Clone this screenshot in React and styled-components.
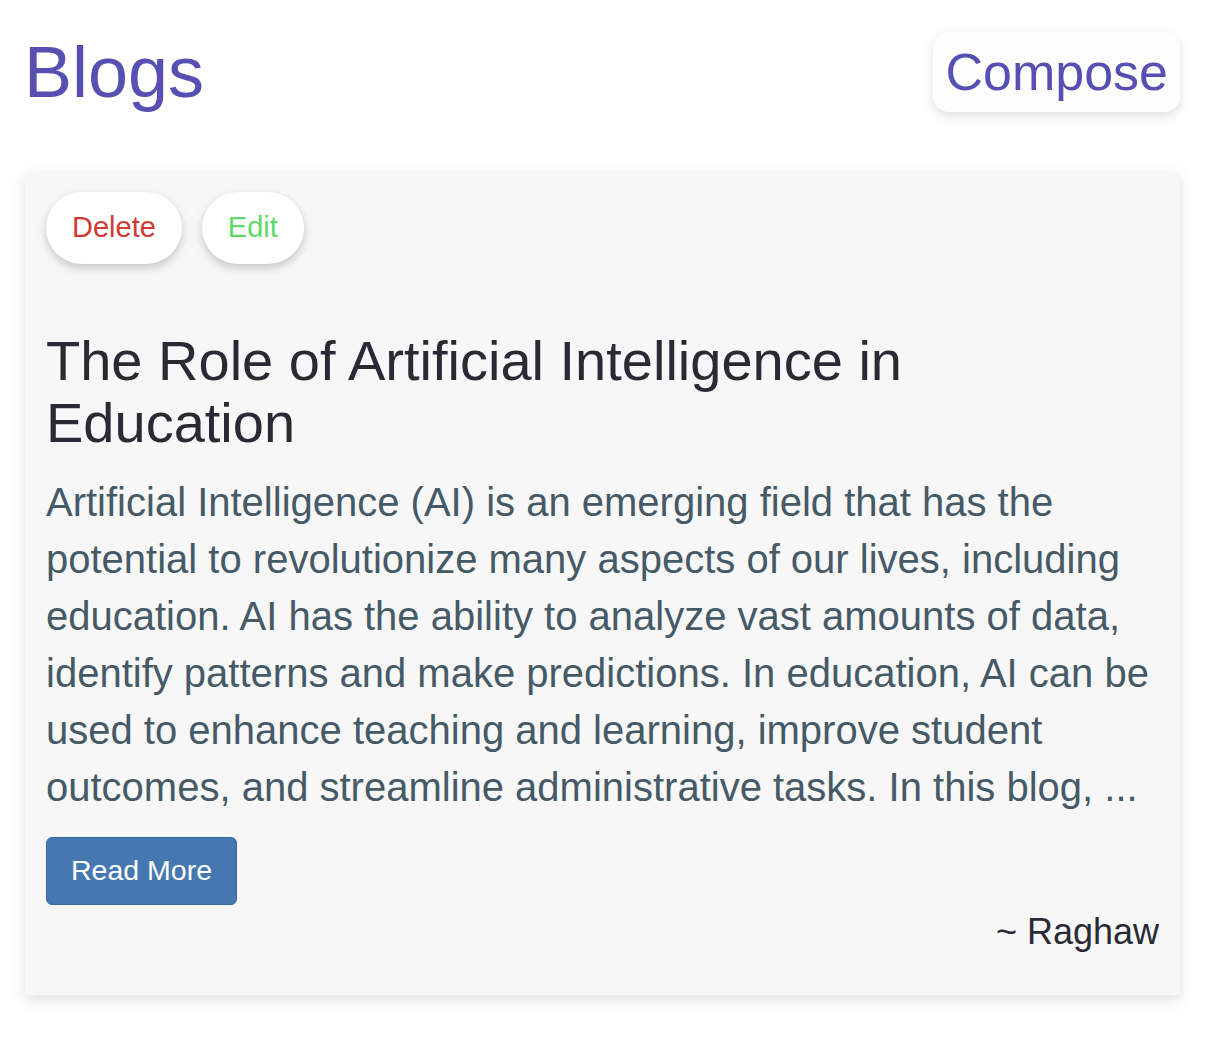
import React from "react";
import styled, { createGlobalStyle } from "styled-components";

const GlobalStyle = createGlobalStyle`
  body {
    margin: 0;
    background: #ffffff;
    font-family: "Liberation Sans", Arial, Helvetica, sans-serif;
  }
`;

const Page = styled.div`
  padding: 31px 26px 40px 25px;
`;

const Header = styled.header`
  display: flex;
  justify-content: space-between;
  align-items: center;
`;

const PageTitle = styled.h1`
  margin: 0 0 0 -1px;
  font-size: 72px;
  font-weight: 400;
  line-height: normal;
  color: #5750b2;
`;

const ComposeButton = styled.button`
  font-family: inherit;
  font-size: 52px;
  line-height: normal;
  color: #5750b2;
  background: #fdfdfd;
  border: none;
  border-radius: 16px;
  padding: 10px 12px;
  box-shadow: 0 4px 12px rgba(0, 0, 0, 0.13);
  cursor: pointer;
`;

const Card = styled.article`
  margin-top: 59px;
  background: #f7f7f7;
  padding: 20px 21px 20px;
  box-shadow: 0 5px 14px rgba(0, 0, 0, 0.12);
`;

const Actions = styled.div`
  display: flex;
  gap: 20px;
`;

const PillButton = styled.button`
  font-family: inherit;
  font-size: 29px;
  line-height: normal;
  color: ${(p) => p.$color};
  background: #ffffff;
  border: none;
  border-radius: 40px;
  padding: 19px 26px 20px;
  box-shadow: 0 4px 10px rgba(0, 0, 0, 0.2);
  cursor: pointer;
`;

const PostTitle = styled.h2`
  margin: 66px 0 0;
  font-size: 56px;
  font-weight: 400;
  line-height: 61.6px;
  color: #2a2a35;
`;

const Excerpt = styled.p`
  margin: 21px 0 0;
  font-size: 40px;
  line-height: 57px;
  color: #455a66;
`;

const ReadMore = styled.button`
  margin-top: 21px;
  font-family: inherit;
  font-size: 28.5px;
  line-height: normal;
  color: #ffffff;
  background: #4577b0;
  border: 1px solid #3a69a2;
  border-radius: 6px;
  padding: 16px 24px 17px;
  cursor: pointer;
`;

const Author = styled.p`
  margin: 6px 0 22px;
  text-align: right;
  font-size: 36px;
  line-height: normal;
  color: #2a2a35;
`;

const post = {
  title: "The Role of Artificial Intelligence in Education",
  excerpt:
    "Artificial Intelligence (AI) is an emerging field that has the potential to revolutionize many aspects of our lives, including education. AI has the ability to analyze vast amounts of data, identify patterns and make predictions. In education, AI can be used to enhance teaching and learning, improve student outcomes, and streamline administrative tasks. In this blog, ...",
  author: "Raghaw",
};

const App = () => {
  return (
    <Page>
      <GlobalStyle />
      <Header>
        <PageTitle>Blogs</PageTitle>
        <ComposeButton>Compose</ComposeButton>
      </Header>
      <Card>
        <Actions>
          <PillButton $color="#d03c34">Delete</PillButton>
          <PillButton $color="#5fd86a">Edit</PillButton>
        </Actions>
        <PostTitle>{post.title}</PostTitle>
        <Excerpt>{post.excerpt}</Excerpt>
        <ReadMore>Read More</ReadMore>
        <Author>~ {post.author}</Author>
      </Card>
    </Page>
  );
};

export default App;
